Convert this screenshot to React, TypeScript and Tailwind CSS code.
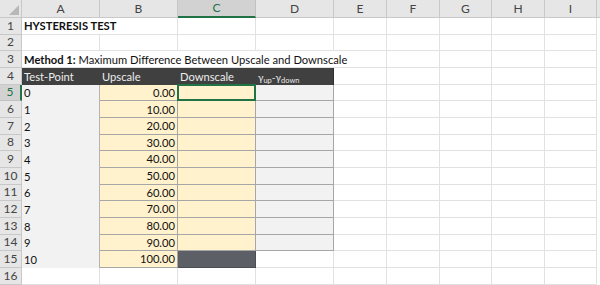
import React from 'react';

const COLS = ['A', 'B', 'C', 'D', 'E', 'F', 'G', 'H', 'I'];
const FONT = { fontFamily: 'Lato, "Liberation Sans", Arial, sans-serif' };

type Cell = { text?: React.ReactNode; cls: string; skip?: boolean };

const grid = 'border-r border-b border-[#e1e1e1]';

function cellFor(row: number, col: number): Cell {
  // row 1-16, col 0-8 (A..I)
  if (row === 1 && col === 0) {
    return { text: <span className="font-bold">HYSTERESIS TEST</span>, cls: `${grid} col-span-2 pl-[2px] bg-white` };
  }
  if (row === 1 && col === 1) return { cls: '', skip: true };
  if (row === 3 && col === 0) {
    return {
      text: (
        <span>
          <span className="font-bold">Method 1:</span> Maximum Difference Between Upscale and Downscale
        </span>
      ),
      cls: `${grid} col-span-5 pl-[2px] bg-white`,
    };
  }
  if (row === 3 && col > 0 && col < 5) return { cls: '', skip: true };
  if (row === 4 && col < 4) {
    const labels = ['Test-Point', 'Upscale', 'Downscale'];
    if (col === 3) {
      return {
        text: (
          <span className="text-[10px] text-[#e8e8e8]">
            γ<sub className="text-[7.5px]">up</sub>-γ<sub className="text-[7.5px]">down</sub>
          </span>
        ),
        cls: 'bg-[#404040] border-r border-[#2f2f2f] pl-[2px] pt-[1px]',
      };
    }
    return { text: labels[col], cls: 'bg-[#404040] text-[#ececec] pl-[2px]' };
  }
  if (row >= 5 && row <= 15 && col === 0) {
    return { text: String(row - 5), cls: 'bg-[#f2f2f2] border-r border-[#b4b4b4] pl-[2px]' };
  }
  if (row >= 5 && row <= 15 && col === 1) {
    return {
      text: ((row - 5) * 10).toFixed(2),
      cls: 'bg-[#fff2cc] border-r border-b border-[#a6a6a6] text-right pr-[2px]',
    };
  }
  if (row === 5 && col === 2) {
    return { cls: 'bg-[#fff2cc] border-2 border-[#217346] -mt-[1px] -ml-[1px]' };
  }
  if (row >= 6 && row <= 14 && col === 2) {
    return { cls: 'bg-[#fff2cc] border-r border-b border-[#a6a6a6]' };
  }
  if (row === 15 && col === 2) {
    return { cls: 'bg-[#5c5f66] border-r border-b border-[#4a4d52]' };
  }
  if (row >= 5 && row <= 14 && col === 3) {
    return { cls: 'bg-[#f2f2f2] border-r border-b border-[#a6a6a6]' };
  }
  return { cls: `${grid} bg-white` };
}

export default function App() {
  const rows = Array.from({ length: 16 }, (_, i) => i + 1);
  return (
    <div
      className="w-[600px] h-[285px] overflow-hidden bg-white text-[11.2px] text-[#111]"
      style={FONT}
    >
      <div className="grid grid-cols-[22px_78px_78px_78px_78px_53px_53px_52px_53px_52px_3px] grid-rows-[18px_repeat(16,16.67px)]">
        {/* corner */}
        <div className="bg-[#e6e6e6] border-r border-b border-[#c8c8c8] relative">
          <div className="absolute right-[2px] bottom-[2px] w-0 h-0 border-l-[10px] border-l-transparent border-b-[10px] border-b-[#b8b8b8]" />
        </div>
        {COLS.map((c) =>
          c === 'C' ? (
            <div
              key={c}
              className="bg-[#d2d2d2] border-r border-[#c0c0c0] border-b-2 border-b-[#217346] text-[#217346] flex items-center justify-center text-[12px]"
            >
              {c}
            </div>
          ) : (
            <div
              key={c}
              className="bg-[#e6e6e6] border-r border-b border-[#c8c8c8] text-[#444] flex items-center justify-center text-[12px]"
            >
              {c}
            </div>
          )
        )}
        <div className="bg-[#e6e6e6] border-b border-[#c8c8c8]" />

        {rows.map((r) => (
          <React.Fragment key={r}>
            {r === 5 ? (
              <div className="bg-[#d2d2d2] border-r-2 border-r-[#217346] border-b border-[#c0c0c0] text-[#217346] flex items-center justify-center text-[12px]">
                {r}
              </div>
            ) : (
              <div className="bg-[#e6e6e6] border-r border-b border-[#c8c8c8] text-[#444] flex items-center justify-center text-[12px]">
                {r}
              </div>
            )}
            {COLS.map((_, ci) => {
              const cell = cellFor(r, ci);
              if (cell.skip) return null;
              return (
                <div key={ci} className={`flex items-center leading-none whitespace-nowrap ${cell.cls}`}>
                  {cell.text !== undefined && <div className="flex-1">{cell.text}</div>}
                </div>
              );
            })}
            <div className="bg-white" />
          </React.Fragment>
        ))}
      </div>
    </div>
  );
}
